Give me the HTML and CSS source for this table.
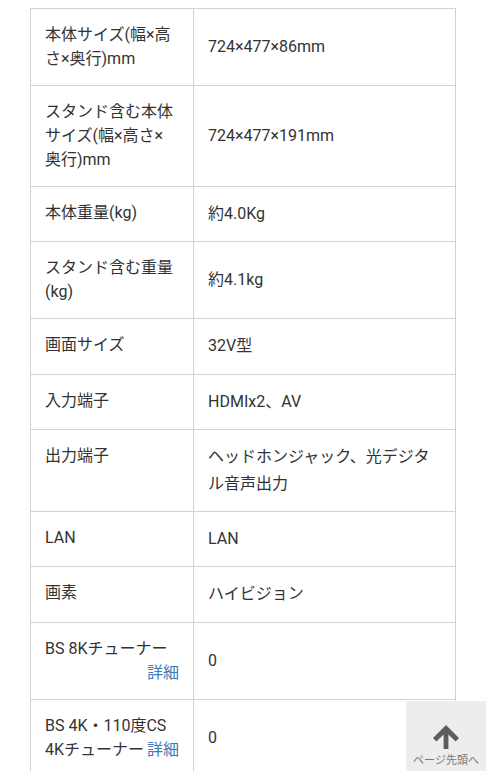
FILE: index.html
```html
<!DOCTYPE html>
<html lang="ja">
<head>
<meta charset="utf-8">
<title>仕様</title>
<link rel="stylesheet" href="styles.css">
</head>
<body>
<table class="spec">
  <tbody>
    <tr><th>本体サイズ(幅×高さ×奥行)mm</th><td>724×477×86mm</td></tr>
    <tr><th>スタンド含む本体サイズ(幅×高さ×奥行)mm</th><td>724×477×191mm</td></tr>
    <tr><th>本体重量(kg)</th><td>約4.0Kg</td></tr>
    <tr><th>スタンド含む重量(kg)</th><td>約4.1kg</td></tr>
    <tr><th>画面サイズ</th><td>32V型</td></tr>
    <tr><th>入力端子</th><td>HDMIx2、AV</td></tr>
    <tr><th>出力端子</th><td>ヘッドホンジャック、光デジタル音声出力</td></tr>
    <tr><th>LAN</th><td>LAN</td></tr>
    <tr><th>画素</th><td>ハイビジョン</td></tr>
    <tr><th>BS 8Kチューナー <a class="detail" href="#">詳細</a></th><td>0</td></tr>
    <tr><th>BS 4K・110度CS 4Kチューナー <a class="detail" href="#">詳細</a></th><td>0</td></tr>
  </tbody>
</table>
<a class="pagetop" href="#">
  <svg class="pagetop-icon" width="26" height="24" viewBox="0 0 26 24" aria-hidden="true">
    <path d="M13 0 L26 13 L22.6 16.4 L15.4 9.4 L15.4 24 L10.6 24 L10.6 9.4 L3.4 16.4 L0 13 Z" fill="#5c5c5c"/>
  </svg>
  <span class="pagetop-label">ページ先頭へ</span>
</a>
</body>
</html>
```

FILE: styles.css
```css
html, body {
  background: #fff;
}
body {
  margin: 8px 30px 0 30px;
  font-family: Roboto, "Noto Sans CJK JP", sans-serif;
  font-size: 16px;
  color: #333;
}
.spec {
  width: 426px;
  border-collapse: collapse;
  table-layout: fixed;
}
.spec th,
.spec td {
  border: 1px solid #d2d2d2;
  padding: 14px;
  text-align: left;
  font-weight: normal;
}
.spec th {
  width: 134px;
  vertical-align: top;
  line-height: 24px;
}
.spec td {
  vertical-align: middle;
  line-height: 26.4px;
}
.detail {
  float: right;
  color: #3d7ab8;
  text-decoration: none;
}
.pagetop {
  position: fixed;
  right: 0;
  bottom: -20px;
  width: 80px;
  height: 90px;
  background: #ededed;
  display: flex;
  flex-direction: column;
  align-items: center;
  padding-top: 24px;
  box-sizing: border-box;
  text-decoration: none;
}
.pagetop-icon {
  display: block;
}
.pagetop-label {
  margin-top: 5px;
  font-size: 11px;
  line-height: 14px;
  color: #777;
  white-space: nowrap;
}
```
